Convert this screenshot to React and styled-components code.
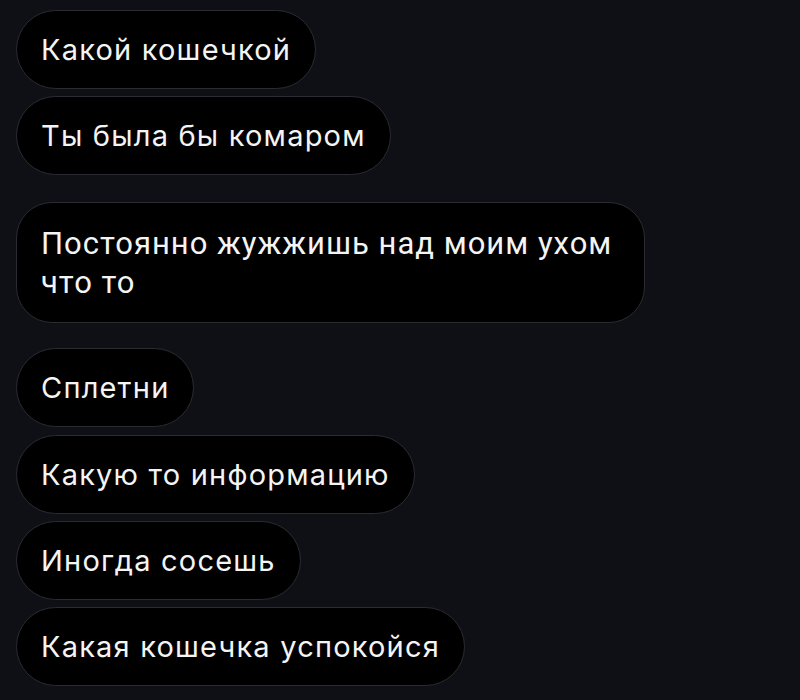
import styled, { createGlobalStyle } from "styled-components";

const GlobalStyle = createGlobalStyle`
  html, body {
    margin: 0;
    padding: 0;
    background: #0e1016;
  }
`;

const Thread = styled.div`
  width: 800px;
  height: 700px;
  box-sizing: border-box;
  padding: 10px 16px 0;
  display: flex;
  flex-direction: column;
  align-items: flex-start;
  overflow: hidden;
  background: #0e1016;
`;

// pill for one-liners, rounded card for the long wrapped message
const Bubble = styled.div`
  box-sizing: border-box;
  max-width: 629px;
  margin-top: ${(p) => p.$gap}px;
  padding: ${(p) => (p.$wide ? "20.5px 28px 20.5px 24px" : "20px 24px")};
  background: #000;
  border: 1px solid #2a2c32;
  border-radius: ${(p) => (p.$wide ? "36px" : "40px")};
  color: #f4f4f4;
  font-family: ${(p) => (p.$wide ? "Roboto" : "Inter")}, "Noto Sans", sans-serif;
  font-size: ${(p) => (p.$wide ? "31px" : "29px")};
  line-height: ${(p) => (p.$wide ? "39px" : "37px")};
  letter-spacing: ${(p) => (p.$wide ? "1px" : "1.2px")};
`;

const messages = [
  { text: "Какой кошечкой", gap: 0 },
  { text: "Ты была бы комаром", gap: 7 },
  { text: "Постоянно жужжишь над моим ухом что то", gap: 27, wide: true },
  { text: "Сплетни", gap: 25 },
  { text: "Какую то информацию", gap: 8 },
  { text: "Иногда сосешь", gap: 7 },
  { text: "Какая кошечка успокойся", gap: 7 },
];

export default function App() {
  return (
    <>
      <GlobalStyle />
      <Thread>
        {messages.map((m, i) => (
          <Bubble key={i} $gap={m.gap} $wide={m.wide}>
            {m.text}
          </Bubble>
        ))}
      </Thread>
    </>
  );
}
